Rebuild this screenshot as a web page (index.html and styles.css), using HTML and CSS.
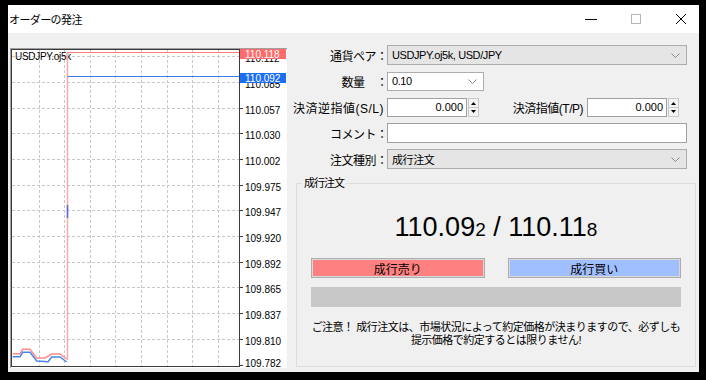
FILE: index.html
```html
<!DOCTYPE html>
<html lang="ja">
<head>
  <meta charset="UTF-8">
  <title>オーダーの発注</title>
  <link rel="stylesheet" href="styles.css">
</head>
<body>
  <div class="window">

    <!-- タイトルバー -->
    <div class="titlebar">
      <span class="title">オーダーの発注</span>
      <div class="controls">
        <span class="ctl"><svg width="12" height="12" viewBox="0 0 12 12"><line x1="0" y1="6.5" x2="12" y2="6.5" stroke="#000"/></svg></span>
        <span class="ctl"><svg width="12" height="12" viewBox="0 0 12 12"><rect x="1.5" y="1.5" width="9" height="9" fill="none" stroke="#b5b5b5"/></svg></span>
        <span class="ctl"><svg width="12" height="12" viewBox="0 0 12 12"><path d="M1 1 L11 11 M11 1 L1 11" stroke="#000" stroke-width="1"/></svg></span>
      </div>
    </div>

    <div class="body">

      <!-- チャート -->
      <div class="chart">
        <svg width="277" height="320" viewBox="0 0 277 320" font-family="Liberation Sans, sans-serif" font-size="10">
          <line x1="0.5" y1="0" x2="0.5" y2="320" stroke="#a0a0a0"/>
          <line x1="0" y1="0.5" x2="277" y2="0.5" stroke="#a0a0a0"/>
          <g stroke="#c8c8c8" stroke-dasharray="3 2">
            <line x1="29.5" y1="2" x2="29.5" y2="318"/>
            <line x1="54.5" y1="2" x2="54.5" y2="318"/>
            <line x1="80.5" y1="2" x2="80.5" y2="318"/>
            <line x1="105.5" y1="2" x2="105.5" y2="318"/>
            <line x1="131.5" y1="2" x2="131.5" y2="318"/>
            <line x1="157.5" y1="2" x2="157.5" y2="318"/>
            <line x1="182.5" y1="2" x2="182.5" y2="318"/>
            <line x1="208.5" y1="2" x2="208.5" y2="318"/>
            <line x1="2" y1="8.5" x2="229" y2="8.5"/>
            <line x1="2" y1="34.5" x2="229" y2="34.5"/>
            <line x1="2" y1="60.5" x2="229" y2="60.5"/>
            <line x1="2" y1="85.5" x2="229" y2="85.5"/>
            <line x1="2" y1="111.5" x2="229" y2="111.5"/>
            <line x1="2" y1="137.5" x2="229" y2="137.5"/>
            <line x1="2" y1="162.5" x2="229" y2="162.5"/>
            <line x1="2" y1="188.5" x2="229" y2="188.5"/>
            <line x1="2" y1="214.5" x2="229" y2="214.5"/>
            <line x1="2" y1="239.5" x2="229" y2="239.5"/>
            <line x1="2" y1="265.5" x2="229" y2="265.5"/>
            <line x1="2" y1="291.5" x2="229" y2="291.5"/>
          </g>
          <rect x="1.5" y="1.5" width="228" height="317" fill="none" stroke="#3c3c3c"/>
          <g stroke="#3c3c3c">
            <line x1="230" y1="8.5" x2="233" y2="8.5"/>
            <line x1="230" y1="34.5" x2="233" y2="34.5"/>
            <line x1="230" y1="60.5" x2="233" y2="60.5"/>
            <line x1="230" y1="85.5" x2="233" y2="85.5"/>
            <line x1="230" y1="111.5" x2="233" y2="111.5"/>
            <line x1="230" y1="137.5" x2="233" y2="137.5"/>
            <line x1="230" y1="162.5" x2="233" y2="162.5"/>
            <line x1="230" y1="188.5" x2="233" y2="188.5"/>
            <line x1="230" y1="214.5" x2="233" y2="214.5"/>
            <line x1="230" y1="239.5" x2="233" y2="239.5"/>
            <line x1="230" y1="265.5" x2="233" y2="265.5"/>
            <line x1="230" y1="291.5" x2="233" y2="291.5"/>
            <line x1="230" y1="317.5" x2="233" y2="317.5"/>
          </g>
          <g fill="#000">
            <text x="235" y="14">110.112</text>
            <text x="235" y="40">110.085</text>
            <text x="235" y="66">110.057</text>
            <text x="235" y="91">110.030</text>
            <text x="235" y="117">110.002</text>
            <text x="235" y="143">109.975</text>
            <text x="235" y="168">109.947</text>
            <text x="235" y="194">109.920</text>
            <text x="235" y="220">109.892</text>
            <text x="235" y="245">109.865</text>
            <text x="235" y="271">109.837</text>
            <text x="235" y="297">109.810</text>
            <text x="235" y="319">109.782</text>
          </g>
          <text x="5" y="12" fill="#000" letter-spacing="-0.3">USDJPY.oj5k</text>
          <polyline points="2.7,305.7 10,305.7 12.7,301.3 20,301.3 26.7,310 35,310 41.7,306 50,306 56.7,311" fill="none" stroke="#ff8c8c" stroke-width="1.5"/>
          <polyline points="2.7,308.7 10,308.7 12.7,304.3 20,304.3 26.7,313 35,313.5 38,314 41.7,309 50,309 56.7,314" fill="none" stroke="#4a86f0" stroke-width="1.5"/>
          <line x1="57.5" y1="4" x2="57.5" y2="312" stroke="#ffa8a8" stroke-width="1.5"/>
          <line x1="57.5" y1="4.5" x2="229" y2="4.5" stroke="#ff7a7a"/>
          <line x1="57.5" y1="28.5" x2="229" y2="28.5" stroke="#3a7bef"/>
          <line x1="57.5" y1="157" x2="57.5" y2="170" stroke="#5068e0" stroke-width="1.5"/>
          <rect x="230" y="1" width="46" height="10" fill="#ff6a6a"/>
          <text x="235" y="10" fill="#fff">110.118</text>
          <rect x="230" y="25" width="46" height="10" fill="#1b6ef3"/>
          <text x="235" y="34" fill="#fff">110.092</text>
        </svg>
      </div>

      <!-- 注文フォーム -->
      <div class="panel">
        <div class="form">
          <label class="lbl">通貨ペア<span class="colon">：</span></label>
          <div class="combo combo-gray">
            <span>USDJPY.oj5k, USD/JPY</span>
            <svg class="chev" width="9" height="5" viewBox="0 0 9 5"><polyline points="0.5,0.5 4.5,4.5 8.5,0.5" fill="none" stroke="#8a8a8a"/></svg>
          </div>

          <label class="lbl">数量　<span class="colon">：</span></label>
          <div class="field-row">
            <div class="combo combo-small">
              <span>0.10</span>
              <svg class="chev" width="9" height="5" viewBox="0 0 9 5"><polyline points="0.5,0.5 4.5,4.5 8.5,0.5" fill="none" stroke="#8a8a8a"/></svg>
            </div>
          </div>

          <label class="lbl lbl-plain">決済逆指値(S/L)</label>
          <div class="field-row">
            <div class="spin">
              <span class="spin-input">0.000</span>
              <svg class="spin-btn" width="11" height="19" viewBox="0 0 11 19"><rect x="0.5" y="0.5" width="10" height="18" fill="#f4f4f4" stroke="#c8c8c8"/><line x1="1" y1="9.5" x2="10" y2="9.5" stroke="#c8c8c8"/><path d="M3 7 L5.5 4 L8 7 Z M3 12 L5.5 15 L8 12 Z" fill="#000"/></svg>
            </div>
            <label class="lbl-inline">決済指値(T/P)</label>
            <div class="spin">
              <span class="spin-input">0.000</span>
              <svg class="spin-btn" width="11" height="19" viewBox="0 0 11 19"><rect x="0.5" y="0.5" width="10" height="18" fill="#f4f4f4" stroke="#c8c8c8"/><line x1="1" y1="9.5" x2="10" y2="9.5" stroke="#c8c8c8"/><path d="M3 7 L5.5 4 L8 7 Z M3 12 L5.5 15 L8 12 Z" fill="#000"/></svg>
            </div>
          </div>

          <label class="lbl">コメント<span class="colon">：</span></label>
          <div class="textbox"></div>

          <label class="lbl">注文種別<span class="colon">：</span></label>
          <div class="combo combo-gray">
            <span>成行注文</span>
            <svg class="chev" width="9" height="5" viewBox="0 0 9 5"><polyline points="0.5,0.5 4.5,4.5 8.5,0.5" fill="none" stroke="#8a8a8a"/></svg>
          </div>
        </div>

        <fieldset class="group">
          <legend>成行注文</legend>
          <div class="group-body">
            <div class="quote">110.09<span class="pip">2</span> / 110.11<span class="pip">8</span></div>
            <div class="trade-buttons">
              <button class="btn sell">成行売り</button>
              <button class="btn buy">成行買い</button>
            </div>
            <div class="progress"></div>
            <p class="notice">ご注意！ 成行注文は、市場状況によって約定価格が決まりますので、必ずしも<br>提示価格で約定するとは限りません!</p>
          </div>
        </fieldset>
      </div>
    </div>
  </div>
</body>
</html>
```

FILE: styles.css
```css
html, body {
  margin: 0;
  padding: 0;
}
body {
  background: #000;
  width: 706px;
  height: 380px;
  overflow: hidden;
  font-family: "Liberation Sans", "Noto Sans CJK JP", sans-serif;
  font-size: 11px;
  color: #000;
}
.window {
  margin: 5px 0 0 8px;
  width: 691px;
  height: 367px;
  display: flex;
  flex-direction: column;
  background: #f0f0f0;
}
.titlebar {
  height: 28px;
  background: #fff;
  display: flex;
  align-items: center;
  padding-left: 1px;
}
.title {
  font-size: 11px;
  letter-spacing: -0.6px;
}
.controls {
  margin-left: auto;
  display: flex;
  gap: 33px;
  padding-right: 12px;
}
.ctl {
  display: flex;
  width: 12px;
  height: 12px;
}
.body {
  flex: 1;
  display: flex;
}
.chart {
  margin: 15px 0 0 2px;
  width: 277px;
  height: 320px;
  background: #fff;
}
.chart svg {
  display: block;
}
.panel {
  flex: 1;
  padding: 12px 3px 0 9px;
}
.form {
  display: grid;
  grid-template-columns: 91px 300px;
  grid-auto-rows: 20px;
  row-gap: 6px;
}
.lbl {
  display: flex;
  align-items: center;
  justify-content: flex-end;
  font-size: 12px;
  letter-spacing: -0.5px;
  white-space: nowrap;
}
.colon {
  width: 11px;
  text-align: center;
  letter-spacing: 0;
}
.lbl-plain {
  padding-right: 3px;
  letter-spacing: 0.5px;
}
.field-row {
  display: flex;
  align-items: center;
}
.combo, .textbox, .spin-input {
  box-sizing: border-box;
  height: 20px;
  border: 1px solid #adadad;
  background: #fff;
}
.combo {
  display: flex;
  align-items: center;
  padding: 0 6px 0 4px;
  letter-spacing: -0.4px;
}
.combo .chev {
  margin-left: auto;
}
.combo-gray {
  background: #e5e5e5;
}
.combo-small {
  width: 97px;
  height: 19px;
}
.spin {
  display: flex;
  align-items: center;
  gap: 1px;
}
.spin-input {
  width: 80px;
  height: 19px;
  display: flex;
  align-items: center;
  justify-content: flex-end;
  padding-right: 3px;
  border-color: #a0a0a0;
}
.spin-btn {
  display: block;
}
.lbl-inline {
  width: 108px;
  text-align: right;
  padding-right: 4px;
  box-sizing: border-box;
  font-size: 12px;
  letter-spacing: -0.5px;
  white-space: nowrap;
}
.textbox {
  border-color: #a0a0a0;
}
.group {
  margin: 7px 0 0 0;
  padding: 0;
  min-width: 0;
  height: 191px;
  box-sizing: border-box;
  border: 1px solid #dcdcdc;
}
.group legend {
  margin-left: 5px;
  padding: 0 2px;
  line-height: 14px;
  letter-spacing: -1px;
}
.group-body {
  padding: 0 14px;
}
.quote {
  margin-top: 21px;
  height: 32px;
  line-height: 32px;
  font-size: 27px;
  text-align: center;
}
.pip {
  font-size: 19px;
}
.trade-buttons {
  margin-top: 15px;
  display: flex;
  gap: 23px;
}
.btn {
  flex: 1;
  height: 20px;
  padding: 0;
  border: 1px solid #adadad;
  box-shadow: inset 0 0 0 1px #d8d8d8;
  font-family: inherit;
  font-size: 12px;
  color: #000;
}
.sell {
  background: #ff8080;
}
.buy {
  background: #a0bfff;
}
.progress {
  margin-top: 9px;
  height: 20px;
  background: #c8c8c8;
}
.notice {
  margin: 14px 0 0 0;
  line-height: 13px;
  text-align: center;
  letter-spacing: -0.5px;
}
```
